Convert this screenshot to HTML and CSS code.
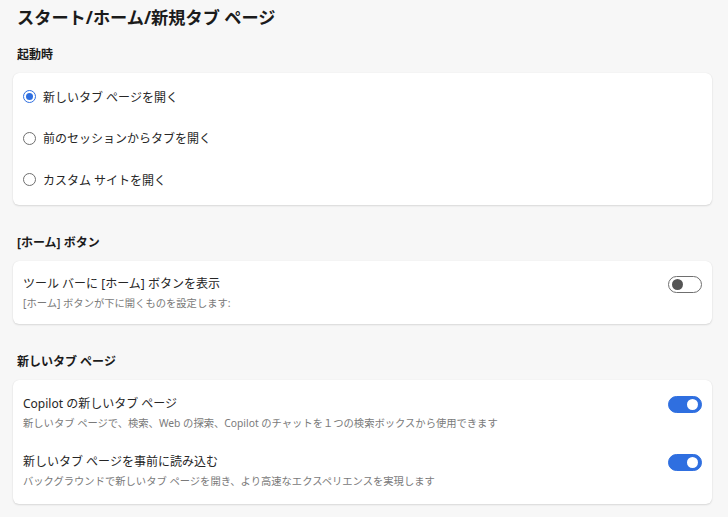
FILE: index.html
```html
<!DOCTYPE html>
<html lang="ja">
<head>
    <meta charset="UTF-8">
    <meta name="viewport" content="width=device-width, initial-scale=1.0">
    <title>スタート/ホーム/新規タブ ページ</title>
    <link rel="stylesheet" href="styles.css">
</head>
<body>
    <h1 class="page-title">スタート/ホーム/新規タブ ページ</h1>

    <!-- 起動時 -->
    <h2 class="section-title">起動時</h2>
    <div class="card card-radios">
        <label class="radio-row">
            <span class="radio checked"></span>
            <span class="radio-label">新しいタブ ページを開く</span>
        </label>
        <label class="radio-row">
            <span class="radio"></span>
            <span class="radio-label">前のセッションからタブを開く</span>
        </label>
        <label class="radio-row">
            <span class="radio"></span>
            <span class="radio-label">カスタム サイトを開く</span>
        </label>
    </div>

    <!-- ホーム ボタン -->
    <h2 class="section-title">[ホーム] ボタン</h2>
    <div class="card">
        <div class="setting">
            <div class="setting-text">
                <div class="setting-name">ツール バーに [ホーム] ボタンを表示</div>
                <div class="setting-desc">[ホーム] ボタンが下に開くものを設定します:</div>
            </div>
            <span class="toggle"></span>
        </div>
    </div>

    <!-- 新しいタブ ページ -->
    <h2 class="section-title">新しいタブ ページ</h2>
    <div class="card card-list">
        <div class="setting">
            <div class="setting-text">
                <div class="setting-name">Copilot の新しいタブ ページ</div>
                <div class="setting-desc">新しいタブ ページで、検索、Web の探索、Copilot のチャットを１つの検索ボックスから使用できます</div>
            </div>
            <span class="toggle on"></span>
        </div>
        <div class="setting">
            <div class="setting-text">
                <div class="setting-name">新しいタブ ページを事前に読み込む</div>
                <div class="setting-desc">バックグラウンドで新しいタブ ページを開き、より高速なエクスペリエンスを実現します</div>
            </div>
            <span class="toggle on"></span>
        </div>
    </div>
</body>
</html>
```

FILE: styles.css
```css
body {
    margin: 0;
    padding: 0 16px 20px 13px;
    background-color: #f7f7f7;
    font-family: 'Noto Sans', 'Noto Sans CJK JP', sans-serif;
    color: #1b1b1b;
}

.page-title {
    margin: 5px 0 0 4px;
    font-size: 17.2px;
    line-height: 26px;
    font-weight: bold;
}

.section-title {
    margin: 28px 0 8px 4px;
    font-size: 12px;
    line-height: 20px;
    font-weight: bold;
}

.page-title + .section-title {
    margin-top: 14px;
}

.card {
    background-color: #fff;
    border-radius: 6px;
    box-shadow: 0 1px 2px rgba(0, 0, 0, 0.12), 0 0 1px rgba(0, 0, 0, 0.1);
    padding: 14px 10px 13px 10px;
}

/* ラジオボタン */
.card-radios {
    padding: 3px 10px 4px 10px;
}

.radio-row {
    display: flex;
    align-items: center;
    height: 41.5px;
    gap: 7px;
    font-size: 12px;
    color: #262626;
}

.radio {
    width: 11px;
    height: 11px;
    border: 1.5px solid #6f6f6f;
    border-radius: 50%;
    flex-shrink: 0;
    position: relative;
}

.radio.checked {
    border-color: #2f6fe0;
}

.radio.checked::after {
    content: '';
    position: absolute;
    top: 2px;
    left: 2px;
    width: 7px;
    height: 7px;
    border-radius: 50%;
    background-color: #2f6fe0;
}

/* 設定行 */
.card-list {
    padding: 15px 10px 15px 10px;
    display: flex;
    flex-direction: column;
    gap: 22px;
}

.setting {
    display: flex;
    align-items: flex-start;
    justify-content: space-between;
}

.setting-name {
    font-size: 12px;
    line-height: 18px;
    color: #262626;
}

.setting-desc {
    margin-top: 2px;
    font-size: 10.3px;
    line-height: 16px;
    color: #7a7a7a;
}

/* トグル */
.toggle {
    width: 32px;
    height: 15px;
    border: 1.5px solid #6f6f6f;
    border-radius: 10px;
    position: relative;
    margin-top: 1px;
    flex-shrink: 0;
}

.toggle::after {
    content: '';
    position: absolute;
    top: 2px;
    left: 3px;
    width: 11px;
    height: 11px;
    border-radius: 50%;
    background-color: #555;
}

.toggle.on {
    background-color: #2f6fe0;
    border-color: #2f6fe0;
}

.toggle.on::after {
    left: auto;
    right: 3px;
    background-color: #fff;
}
```
